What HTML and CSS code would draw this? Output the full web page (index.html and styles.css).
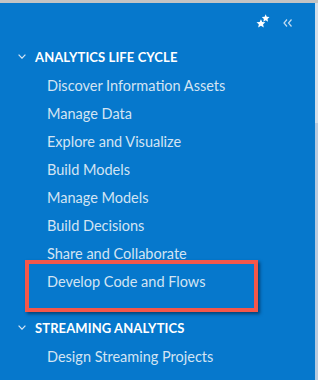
FILE: index.html
```html
<!DOCTYPE html>
<html lang="en">
<head>
    <meta charset="UTF-8">
    <meta name="viewport" content="width=device-width, initial-scale=1.0">
    <title>Navigation</title>
    <link rel="stylesheet" href="styles.css">
</head>
<body>
    <div class="frame">
        <aside class="nav-panel">
            <div class="nav-toolbar">
                <button class="tool-button pin-button" title="Pin">
                    <svg width="14" height="15" viewBox="0 0 13 14">
                        <path d="M9 0.3 L10 2.6 L12.6 2.9 L10.7 4.6 L11.2 7.2 L9 5.9 L6.8 7.2 L7.3 4.6 L5.4 2.9 L8 2.6 Z" fill="#fff"/>
                        <path d="M4.6 4.8 L5.8 7.4 L8.7 7.7 L6.6 9.6 L7.2 12.5 L4.6 11 L2 12.5 L2.6 9.6 L0.4 7.7 L3.4 7.4 Z" fill="#fff"/>
                    </svg>
                </button>
                <button class="tool-button collapse-button" title="Collapse">
                    <svg width="9" height="8" viewBox="0 0 9 8">
                        <polyline points="4,0.5 1,4 4,7.5" fill="none" stroke="currentColor" stroke-width="1.2"/>
                        <polyline points="8.5,0.5 5.5,4 8.5,7.5" fill="none" stroke="currentColor" stroke-width="1.2"/>
                    </svg>
                </button>
            </div>

            <section class="nav-section">
                <h2 class="section-heading">
                    <svg class="chevron" width="8" height="5" viewBox="0 0 8 5">
                        <polyline points="0.6,0.6 4,4.2 7.4,0.6" fill="none" stroke="currentColor" stroke-width="1.2"/>
                    </svg>
                    ANALYTICS LIFE CYCLE
                </h2>
                <ul class="nav-list">
                    <li class="nav-item">Discover Information Assets</li>
                    <li class="nav-item">Manage Data</li>
                    <li class="nav-item">Explore and Visualize</li>
                    <li class="nav-item">Build Models</li>
                    <li class="nav-item">Manage Models</li>
                    <li class="nav-item">Build Decisions</li>
                    <li class="nav-item">Share and Collaborate</li>
                    <li class="nav-item is-marked">Develop Code and Flows</li>
                </ul>
            </section>

            <section class="nav-section">
                <h2 class="section-heading">
                    <svg class="chevron" width="8" height="5" viewBox="0 0 8 5">
                        <polyline points="0.6,0.6 4,4.2 7.4,0.6" fill="none" stroke="currentColor" stroke-width="1.2"/>
                    </svg>
                    STREAMING ANALYTICS
                </h2>
                <ul class="nav-list">
                    <li class="nav-item">Design Streaming Projects</li>
                </ul>
            </section>
        </aside>
        <div class="scroll-track">
            <div class="scroll-thumb"></div>
        </div>
    </div>
</body>
</html>
```

FILE: styles.css
```css
html, body {
    height: 100%;
    margin: 0;
    padding: 0;
    font-family: Lato, "Open Sans", Arial, sans-serif;
    background-color: #c4c4c4;
}

.frame {
    display: flex;
    height: calc(100% - 3px);
    margin-top: 3px;
    overflow: hidden;
}

.nav-panel {
    flex: 1;
    background-color: #0678cc;
    color: #d3e4f3;
    overflow: hidden;
}

.nav-toolbar {
    display: flex;
    justify-content: flex-end;
    align-items: center;
    gap: 13px;
    height: 38px;
    padding-right: 23px;
}

.tool-button {
    background: none;
    border: none;
    padding: 0;
    cursor: pointer;
    display: flex;
    color: #c3dcf1;
}

.pin-button {
    margin-top: -1px;
}

.collapse-button {
    margin-top: 2px;
}

.nav-section {
    padding-bottom: 16px;
}

.section-heading {
    display: flex;
    align-items: center;
    margin: 0;
    height: 31px;
    padding-left: 18px;
    font-size: 13px;
    font-weight: 700;
    color: #ffffff;
    letter-spacing: 0.1px;
}

.section-heading .chevron {
    margin-right: 9px;
    color: #d6e6f4;
}

.nav-list {
    list-style: none;
    margin: 0;
    padding: 0;
}

.nav-item {
    height: 28px;
    line-height: 28px;
    padding-left: 47px;
    font-size: 14.5px;
    cursor: pointer;
}

.nav-item.is-marked {
    position: relative;
}

.nav-item.is-marked::after {
    content: "";
    position: absolute;
    left: 25px;
    top: -8px;
    width: 225px;
    height: 44px;
    border: 4px solid #f4574a;
    box-shadow: 2px 2px 3px rgba(0, 30, 60, 0.6);
}

.scroll-track {
    width: 3px;
    background-color: #b6cbe0;
}

.scroll-thumb {
    height: 120px;
    background-color: #d3dfea;
}
```
